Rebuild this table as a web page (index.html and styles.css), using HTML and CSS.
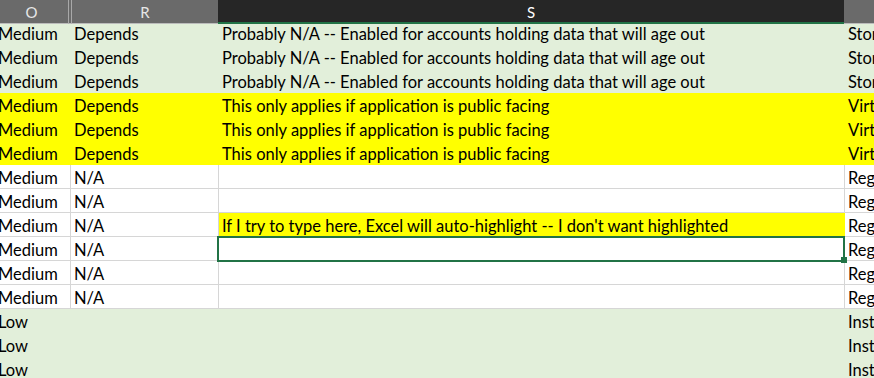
FILE: index.html
```html
<!DOCTYPE html>
<html lang="en">
<head>
<meta charset="utf-8">
<title>Sheet</title>
<link rel="stylesheet" href="styles.css">
</head>
<body>
<div class="app">
  <div class="col-headers">
    <div class="ch">O</div>
    <div class="ch ch-hidden"></div>
    <div class="ch">R</div>
    <div class="ch ch-active">S</div>
    <div class="ch"></div>
  </div>
  <div class="viewport">
    <div class="sheet">
      <div class="row fill-green"><div class="cell">Medium</div><div class="cell">Depends</div><div class="cell">Probably N/A -- Enabled for accounts holding data that will age out</div><div class="cell">Storage</div></div>
      <div class="row fill-green"><div class="cell">Medium</div><div class="cell">Depends</div><div class="cell">Probably N/A -- Enabled for accounts holding data that will age out</div><div class="cell">Storage</div></div>
      <div class="row fill-green"><div class="cell">Medium</div><div class="cell">Depends</div><div class="cell">Probably N/A -- Enabled for accounts holding data that will age out</div><div class="cell">Storage</div></div>
      <div class="row fill-yellow"><div class="cell">Medium</div><div class="cell">Depends</div><div class="cell">This only applies if application is public facing</div><div class="cell">Virtual</div></div>
      <div class="row fill-yellow"><div class="cell">Medium</div><div class="cell">Depends</div><div class="cell">This only applies if application is public facing</div><div class="cell">Virtual</div></div>
      <div class="row fill-yellow"><div class="cell">Medium</div><div class="cell">Depends</div><div class="cell">This only applies if application is public facing</div><div class="cell">Virtual</div></div>
      <div class="row"><div class="cell">Medium</div><div class="cell">N/A</div><div class="cell"></div><div class="cell">Regulatory</div></div>
      <div class="row"><div class="cell">Medium</div><div class="cell">N/A</div><div class="cell"></div><div class="cell">Regulatory</div></div>
      <div class="row"><div class="cell">Medium</div><div class="cell">N/A</div><div class="cell cell-yellow">If I try to type here, Excel will auto-highlight -- I don't want highlighted</div><div class="cell">Regulatory</div></div>
      <div class="row"><div class="cell">Medium</div><div class="cell">N/A</div><div class="cell cell-selected"><span class="sel-box"></span><span class="sel-handle"></span></div><div class="cell">Regulatory</div></div>
      <div class="row"><div class="cell">Medium</div><div class="cell">N/A</div><div class="cell"></div><div class="cell">Regulatory</div></div>
      <div class="row"><div class="cell">Medium</div><div class="cell">N/A</div><div class="cell"></div><div class="cell">Regulatory</div></div>
      <div class="row fill-green"><div class="cell">Low</div><div class="cell"></div><div class="cell"></div><div class="cell">Instance</div></div>
      <div class="row fill-green"><div class="cell">Low</div><div class="cell"></div><div class="cell"></div><div class="cell">Instance</div></div>
      <div class="row fill-green"><div class="cell">Low</div><div class="cell"></div><div class="cell"></div><div class="cell">Instance</div></div>
    </div>
  </div>
</div>
</body>
</html>
```
FILE: styles.css
```css
html, body {
  margin: 0;
  padding: 0;
  background: #ffffff;
  overflow: hidden;
}

.app {
  width: 874px;
  height: 378px;
  overflow: hidden;
  font-family: Lato, "Liberation Sans", sans-serif;
  font-size: 16.5px;
  color: #000000;
}

.col-headers {
  display: grid;
  grid-template-columns: 73px 4px 146px 626px 40px;
  margin-left: -5px;
  height: 24px;
}

.ch {
  box-sizing: border-box;
  height: 24px;
  padding-top: 1px;
  background: #6a6a6a;
  border-bottom: 1px solid #bcbcbc;
  color: #e6e6e6;
  text-align: center;
  line-height: 22px;
  font-size: 15px;
}

.ch-hidden {
  border-left: 1px solid #a8a8a8;
  border-right: 1px solid #a8a8a8;
}

.ch-active {
  background: #262626;
  border-bottom: 2px solid #217346;
  color: #ffffff;
}

.viewport {
  height: 354px;
  overflow: hidden;
}

.sheet {
  margin-top: -3px;
  margin-left: -5px;
}

.row {
  display: grid;
  grid-template-columns: 76px 148px 626px 40px;
  height: 24px;
}

.cell {
  position: relative;
  box-sizing: border-box;
  height: 24px;
  padding: 4px 3px 0;
  line-height: 19px;
  white-space: nowrap;
  overflow: hidden;
  border-right: 1px solid #d6d6d6;
  border-bottom: 1px solid #d6d6d6;
}

.fill-green .cell {
  background: #e2efda;
  border-color: #e2efda;
}

.fill-yellow .cell,
.cell-yellow {
  background: #ffff00;
  border-color: #ffff00;
}

.cell-selected {
  overflow: visible;
}

.sel-box {
  position: absolute;
  top: -1px;
  left: -2px;
  right: -1px;
  bottom: -2px;
  border: 2px solid #217346;
  z-index: 2;
}

.sel-handle {
  position: absolute;
  right: -3px;
  bottom: -3px;
  width: 6px;
  height: 6px;
  background: #217346;
  z-index: 3;
}
```
